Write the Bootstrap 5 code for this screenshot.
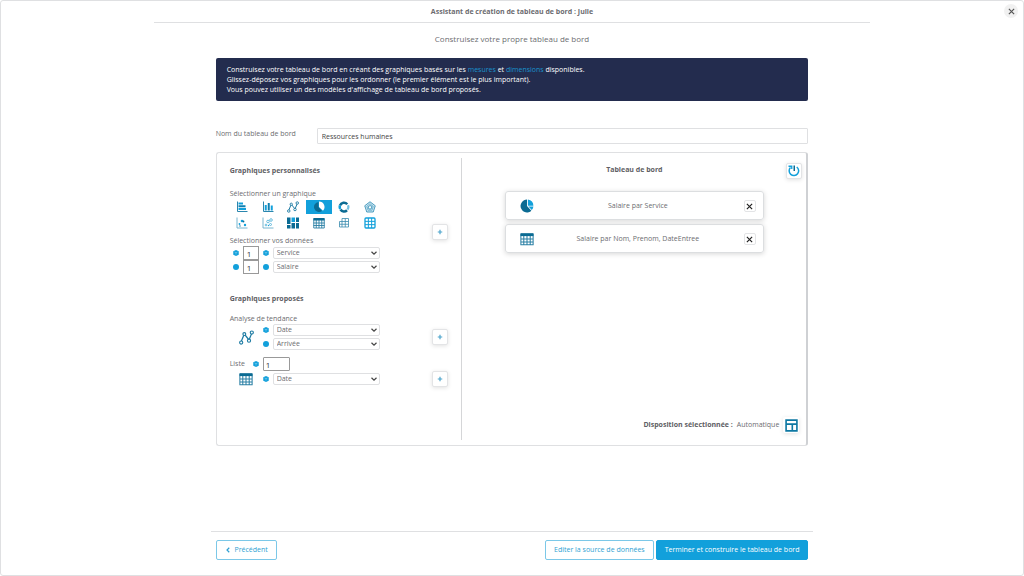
<!DOCTYPE html>
<html lang="fr">
<head>
<meta charset="utf-8">
<meta name="viewport" content="width=device-width, initial-scale=1">
<title>Assistant de création de tableau de bord</title>
<link href="https://cdn.jsdelivr.net/npm/bootstrap@5.3.0/dist/css/bootstrap.min.css" rel="stylesheet">
<style>
:root { --blue: #12a0db; --deep: #0b6b93; --ink: #6c6c70; --line: #dfe0e2; }
body { font-family: "Open Sans", sans-serif; font-size: 7px; line-height: 10px; color: var(--ink); background: #fff; }
svg { display: block; fill: none; }
.wizard { border: 1px solid var(--line); border-radius: 3px; }
.wizard-head { width: 70%; height: 22px; border-bottom: 1px solid var(--line); padding-top: 5px; }
.wizard-title { font-size: 7px; font-weight: 700; line-height: 12px; }
.wizard-close { top: 3px; right: 5px; width: 14px; height: 14px; background: #f1f1f1; color: #555; }
.wizard-sub { font-size: 8px; line-height: 12px; margin: 10px 0 13px; }
.wizard-body { width: 58%; }
.notice { background: #232c4e; color: #fff; border: 0; border-radius: 2px; padding: 7px 11px 6px; margin-bottom: 27px; }
.notice a { color: #1a92cc; text-decoration: none; }
.name-row { margin-bottom: 8px; }
.name-row label { width: 101px; padding-top: 1px; }
.form-control, .form-select { font-size: 7px; line-height: 10px; color: var(--ink); border-color: var(--line); border-radius: 1px; min-height: 0; }
.name-row .form-control { padding: 2px 4px; height: 16px; color: #444; }
.panel { border: 1px solid var(--line); border-right: 2px solid #cfd1d4; border-radius: 3px; padding: 5px 0; min-height: 294px; }
.builder { border-right: 1px solid #d5d6d8; padding: 8px 13px 0; }
.preview { padding: 5px 4px 7px; }
.section-title { font-size: 7px; font-weight: 700; line-height: 10px; margin: 0; color: #606064; }
.builder .section-title { margin-bottom: 13px; }
.builder .proposed { margin: 20px 0 10px; }
.preview-head .section-title { padding-top: 2px; grid-column: 2; }
.types { display: grid; width: 153px; grid-template-columns: repeat(6, 1fr); grid-auto-rows: 16px; margin-bottom: 5px; }
.types label { display: flex; align-items: center; justify-content: center; cursor: pointer; }
.types svg { width: 12px; height: 12px; }
.types .btn-check:checked + label { background: var(--blue); height: 14px; margin-top: 1px; }
.dot { width: 6px; height: 6px; flex: none; }
.field { padding: 1px 10px 1px 3px; height: 12px; width: 107px; line-height: 8px; border-radius: 2px;
  background-position: right 2px center; background-size: 6px 6px;
  background-image: url("data:image/svg+xml,%3csvg xmlns='http://www.w3.org/2000/svg' viewBox='0 0 12 12'%3e%3cpath fill='none' stroke='%23444' stroke-width='2.4' d='M1 3.5l5 5 5-5'/%3e%3c/svg%3e"); }
.count { width: 16px; height: 14px; padding: 0 3px; font-size: 8px; color: #333; border-color: #999; border-radius: 0; }
.count-wide { width: 27px; padding: 0 2px; border-radius: 1px; }
.pair { padding-left: 3px; gap: 4px; }
.field-stack { display: grid; gap: 2px; }
.trend { margin-bottom: 7px; }
.chart-glyph { width: 33px; }
.tile-btn { width: 16px; height: 16px; flex: none; padding: 0; display: flex; align-items: center; justify-content: center; background: #fff; border: 1px solid #e3e4e6; border-radius: 2px; box-shadow: 0 1px 4px rgba(0,0,0,.12); color: #4ba3cb; }
.preview-head { display: grid; grid-template-columns: 1fr auto 1fr; }
.items { width: 77%; gap: 4px; margin: 12px auto 0; }
.item { display: grid; grid-template-columns: 1fr auto 1fr; align-items: center; border: 1px solid #dcdee0; border-radius: 3px; box-shadow: 0 1px 5px rgba(0,0,0,.16); height: 29px; padding: 1px 7px 0 14px; }
.item-x { width: 12px; height: 12px; padding: 0; background: #fff; border: 1px solid #e3e4e6; border-radius: 2px; color: #222; display: flex; align-items: center; justify-content: center; margin-left: auto; }
.disposition { padding-right: 3px; gap: 4px; }
.wizard-foot { width: 59%; border-top: 1px solid var(--line); padding: 8px 5px 15px; gap: 2px; }
.wizard-foot .btn { font-size: 7px; line-height: 10px; height: 20px; padding: 4px 8px; border-radius: 2px; --bs-btn-color: #2f9fd2; --bs-btn-border-color: #7cc8e8; --bs-btn-hover-color: var(--deep); --bs-btn-hover-border-color: var(--blue); }
.wizard-foot .btn-go { --bs-btn-color: #fff; --bs-btn-bg: var(--blue); --bs-btn-border-color: var(--blue); --bs-btn-hover-bg: var(--deep); --bs-btn-hover-color: #fff; }
</style>
</head>
<body>
<svg width="0" height="0" class="position-absolute" aria-hidden="true">
  <symbol id="i-hbar" viewBox="0 0 24 24"><path d="M3 1v20h20" stroke="#2a86ae" stroke-width="2"/><path d="M5 5h9" stroke="#12a0db" stroke-width="4"/><path d="M5 16h15" stroke="#12a0db" stroke-width="4"/><path d="M5 10.500h14" stroke="#0e7fb0" stroke-width="4"/></symbol>
  <symbol id="i-vbar" viewBox="0 0 24 24"><path d="M3 1v20h20" stroke="#2a86ae" stroke-width="2"/><path d="M7.500 19V8M19.500 19V9" stroke="#12a0db" stroke-width="4"/><path d="M13.500 19V4" stroke="#0e7fb0" stroke-width="4"/></symbol>
  <symbol id="i-line" viewBox="0 0 24 24"><path d="M3.500 18.500L8.500 6.500L16 16L20.500 5" stroke="#1d7ba3" stroke-width="2"/><g fill="#fff" stroke="#1d7ba3" stroke-width="1.800"><circle cx="3.500" cy="20" r="2.500"/><circle cx="8.500" cy="6.500" r="2.300"/><circle cx="16" cy="17" r="2.500"/><circle cx="20.500" cy="4" r="2.500"/></g></symbol>
  <symbol id="i-piew" viewBox="0 0 24 24"><path d="M11 2a10 10 0 1 0 7 18L11 12z" fill="#0b6b93"/><path d="M12 1a11 11 0 0 1 8 18.500L12 12z" fill="#fff"/></symbol>
  <symbol id="i-pie" viewBox="0 0 24 24"><path d="M12 1a11 11 0 1 0 7.500 19L12 12z" fill="#0b6b93"/><path d="M13.500 1a11 11 0 0 1 9.500 10.500H13.500z" fill="#12a0db"/><path d="M14.500 13H23a11 11 0 0 1-2.800 6z" fill="#12a0db"/></symbol>
  <symbol id="i-donut" viewBox="0 0 24 24"><path d="M4 9A8.500 8.500 0 0 1 18.500 6.500" stroke="#0b6b93" stroke-width="5"/><path d="M20 8.500A8.500 8.500 0 0 1 19 17" stroke="#6fbfe0" stroke-width="4.500"/><path d="M18 18.500A8.500 8.500 0 0 1 5 17" stroke="#0b6b93" stroke-width="5"/><path d="M4.500 16A8.500 8.500 0 0 1 4 9" stroke="#12a0db" stroke-width="5"/></symbol>
  <symbol id="i-radar" viewBox="0 0 24 24"><path d="M12 1.500L22.500 9.500L18.500 22H5.500L1.500 9.500z" fill="#cfe6f1" stroke="#3a93b9" stroke-width="1.800"/><path d="M12 5.500L18.500 10.500L16 18.500H8L5.500 10.500z" stroke="#5aa9cb" stroke-width="1.500"/><path d="M12 9l4 2-2 5h-4l-2-4z" fill="#fff" stroke="#2b88b0" stroke-width="1.600"/></symbol>
  <symbol id="i-scat" viewBox="0 0 24 24"><path d="M2 1v21h21" stroke="#6aaecb" stroke-width="1.800"/><g fill="#12a0db"><circle cx="12" cy="8" r="2.600"/><circle cx="7" cy="14" r="1.800"/><circle cx="18" cy="16" r="2.400"/></g><circle cx="15" cy="9" r="1.800" fill="#0b6b93"/><circle cx="8" cy="18" r="1.300" fill="#0b6b93"/></symbol>
  <symbol id="i-bub" viewBox="0 0 24 24"><path d="M2 1v21h21" stroke="#6aaecb" stroke-width="1.800"/><g stroke="#3fa9d4" stroke-width="1.500"><circle cx="12" cy="9" r="2.600"/><circle cx="18" cy="6" r="2.600"/><circle cx="17" cy="15" r="2"/><circle cx="8" cy="16" r="1.800"/></g><circle cx="13" cy="17" r="1.300" fill="#12a0db"/></symbol>
  <symbol id="i-tree" viewBox="0 0 24 24"><path d="M0 1h7v13H0zM9 12h7v11H9zM18 1h6v9h-6z" fill="#0b6b93"/><path d="M0 16h7v7H0zM18 12h6v11h-6z" fill="#0b6b93"/><path d="M9 1h7v9H9z" fill="#12a0db"/></symbol>
  <symbol id="i-table" viewBox="0 0 24 24"><path d="M1.500 3v19h21V3M6.500 6v16M12 6v16M17.500 6v16M1 12h22M1 17h22" stroke="#2b80a5" stroke-width="1.800"/><path d="M1 2h22v5H1z" fill="#0b6b93"/></symbol>
  <symbol id="i-pivot" viewBox="0 0 24 24"><path d="M8 3h13v17H3V9h18M8 3v17M14.500 3v17M3 14.500h18" stroke="#3a8cae" stroke-width="1.600"/></symbol>
  <symbol id="i-grid" viewBox="0 0 24 24"><rect x="2" y="2" width="20" height="20" rx="2" stroke="#12a0db" stroke-width="2.600"/><path d="M8.700 2v20M15.300 2v20M2 8.700h20M2 15.300h20" stroke="#12a0db" stroke-width="2"/></symbol>
  <symbol id="i-cube" viewBox="0 0 12 12"><path d="M6 0l5.500 2.700v6.600L6 12L.500 9.300V2.700z" fill="#12a0db"/><path d="M3 4l3 1.500L9 4M6 5.500V9" stroke="#9fd8f0" stroke-width="1"/></symbol>
  <symbol id="i-disc" viewBox="0 0 12 12"><circle cx="6" cy="6" r="6" fill="#12a0db"/></symbol>
  <symbol id="i-plus" viewBox="0 0 12 12"><path d="M6 1.500v9M1.500 6h9" stroke="currentColor" stroke-width="2.400"/></symbol>
  <symbol id="i-x" viewBox="0 0 12 12"><path d="M1.500 1.500l9 9M10.500 1.500l-9 9" stroke="currentColor" stroke-width="2"/></symbol>
  <symbol id="i-power" viewBox="0 0 24 24"><path d="M5 5A9.500 9.500 0 1 0 17.500 4" stroke="#12a0db" stroke-width="3"/><path d="M12.500 1v11" stroke="#0b6b93" stroke-width="3"/><path d="M1 2.500H7.500V8" stroke="#12a0db" stroke-width="2.600"/></symbol>
  <symbol id="i-layout" viewBox="0 0 24 24"><path d="M2 2h20v20H2zM2 9.500h20M13.500 10v12" stroke="#0e78a3" stroke-width="3"/></symbol>
</svg>

<main class="wizard position-relative min-vh-100 d-flex flex-column align-items-center">
  <header class="wizard-head text-center"><h1 class="wizard-title m-0">Assistant de création de tableau de bord : Julie</h1></header>
  <button type="button" class="wizard-close btn p-0 border-0 rounded-circle position-absolute d-flex align-items-center justify-content-center" aria-label="Fermer"><svg width="7" height="7"><use href="#i-x"/></svg></button>
  <p class="wizard-sub text-center">Construisez votre propre tableau de bord</p>

  <div class="wizard-body">
    <div class="notice alert">
      Construisez votre tableau de bord en créant des graphiques basés sur les <a href="#">mesures</a> et <a href="#">dimensions</a> disponibles.<br>
      Glissez-déposez vos graphiques pour les ordonner (le premier élément est le plus important).<br>
      Vous pouvez utiliser un des modèles d'affichage de tableau de bord proposés.
    </div>
    <div class="name-row d-flex">
      <label for="nom" class="flex-shrink-0">Nom du tableau de bord</label>
      <input id="nom" class="form-control" type="text" value="Ressources humaines">
    </div>

    <div class="panel row g-0">
      <section class="builder col-5">
        <h2 class="section-title">Graphiques personnalisés</h2>
        <div class="d-flex align-items-center justify-content-between">
          <div>
            <div>Sélectionner un graphique</div>
            <div class="types" role="radiogroup" aria-label="Sélectionner un graphique">
              <input class="btn-check" type="radio" name="t" id="t1"><label for="t1" title="Barres"><svg><use href="#i-hbar"/></svg></label>
              <input class="btn-check" type="radio" name="t" id="t2"><label for="t2" title="Histogramme"><svg><use href="#i-vbar"/></svg></label>
              <input class="btn-check" type="radio" name="t" id="t3"><label for="t3" title="Courbe"><svg><use href="#i-line"/></svg></label>
              <input class="btn-check" type="radio" name="t" id="t4" checked><label for="t4" title="Secteurs"><svg><use href="#i-piew"/></svg></label>
              <input class="btn-check" type="radio" name="t" id="t5"><label for="t5" title="Anneau"><svg><use href="#i-donut"/></svg></label>
              <input class="btn-check" type="radio" name="t" id="t6"><label for="t6" title="Radar"><svg><use href="#i-radar"/></svg></label>
              <input class="btn-check" type="radio" name="t" id="t7"><label for="t7" title="Nuage de points"><svg><use href="#i-scat"/></svg></label>
              <input class="btn-check" type="radio" name="t" id="t8"><label for="t8" title="Bulles"><svg><use href="#i-bub"/></svg></label>
              <input class="btn-check" type="radio" name="t" id="t9"><label for="t9" title="Treemap"><svg><use href="#i-tree"/></svg></label>
              <input class="btn-check" type="radio" name="t" id="t10"><label for="t10" title="Liste"><svg><use href="#i-table"/></svg></label>
              <input class="btn-check" type="radio" name="t" id="t11"><label for="t11" title="Tableau croisé"><svg><use href="#i-pivot"/></svg></label>
              <input class="btn-check" type="radio" name="t" id="t12"><label for="t12" title="Grille"><svg><use href="#i-grid"/></svg></label>
            </div>
            <div>Sélectionner vos données</div>
            <div class="pair d-flex align-items-center">
              <svg class="dot"><use href="#i-cube"/></svg>
              <input class="form-control count" type="text" value="1" aria-label="Nombre de dimensions">
              <svg class="dot"><use href="#i-cube"/></svg>
              <select class="form-select field" aria-label="Dimension"><option>Service</option></select>
            </div>
            <div class="pair d-flex align-items-center">
              <svg class="dot"><use href="#i-disc"/></svg>
              <input class="form-control count" type="text" value="1" aria-label="Nombre de mesures">
              <svg class="dot"><use href="#i-disc"/></svg>
              <select class="form-select field" aria-label="Mesure"><option>Salaire</option></select>
            </div>
          </div>
          <button type="button" class="tile-btn" aria-label="Ajouter le graphique"><svg width="6" height="6"><use href="#i-plus"/></svg></button>
        </div>

        <h2 class="section-title proposed">Graphiques proposés</h2>
        <div>Analyse de tendance</div>
        <div class="trend d-flex align-items-center">
          <div class="chart-glyph d-flex justify-content-center"><svg width="15" height="15"><use href="#i-line"/></svg></div>
          <div class="field-stack">
            <div class="d-flex align-items-center gap-1"><svg class="dot"><use href="#i-cube"/></svg><select class="form-select field" aria-label="Dimension de tendance"><option>Date</option></select></div>
            <div class="d-flex align-items-center gap-1"><svg class="dot"><use href="#i-disc"/></svg><select class="form-select field" aria-label="Mesure de tendance"><option>Arrivée</option></select></div>
          </div>
          <button type="button" class="tile-btn ms-auto" aria-label="Ajouter la tendance"><svg width="6" height="6"><use href="#i-plus"/></svg></button>
        </div>
        <div class="d-flex align-items-center">
          <label for="nliste" class="pe-2">Liste</label>
          <svg class="dot me-1"><use href="#i-cube"/></svg>
          <input id="nliste" class="form-control count count-wide" type="text" value="1">
        </div>
        <div class="d-flex align-items-center">
          <div class="chart-glyph d-flex justify-content-center"><svg width="14" height="14"><use href="#i-table"/></svg></div>
          <div class="d-flex align-items-center gap-1"><svg class="dot"><use href="#i-cube"/></svg><select class="form-select field" aria-label="Dimension de la liste"><option>Date</option></select></div>
          <button type="button" class="tile-btn ms-auto" aria-label="Ajouter la liste"><svg width="6" height="6"><use href="#i-plus"/></svg></button>
        </div>
      </section>

      <section class="preview col-7 d-flex flex-column">
        <div class="preview-head">
          <h2 class="section-title">Tableau de bord</h2>
          <button type="button" class="tile-btn ms-auto" aria-label="Réinitialiser"><svg width="12" height="12"><use href="#i-power"/></svg></button>
        </div>
        <div class="items d-flex flex-column">
          <div class="item">
            <svg width="14" height="14"><use href="#i-pie"/></svg>
            <span>Salaire par Service</span>
            <button type="button" class="item-x" aria-label="Supprimer"><svg width="7" height="7"><use href="#i-x"/></svg></button>
          </div>
          <div class="item">
            <svg width="14" height="14"><use href="#i-table"/></svg>
            <span>Salaire par Nom, Prenom, DateEntree</span>
            <button type="button" class="item-x" aria-label="Supprimer"><svg width="7" height="7"><use href="#i-x"/></svg></button>
          </div>
        </div>
        <div class="disposition mt-auto d-flex align-items-center justify-content-end">
          <strong class="section-title">Disposition sélectionnée :</strong>
          <span>Automatique</span>
          <button type="button" class="tile-btn border-0" aria-label="Choisir la disposition"><svg width="13" height="13"><use href="#i-layout"/></svg></button>
        </div>
      </section>
    </div>
  </div>

  <footer class="wizard-foot d-flex mt-auto">
    <button type="button" class="btn me-auto d-flex align-items-center gap-1"><svg width="6" height="6" viewBox="0 0 12 12"><path d="M8.500 1.500L4 6l4.500 4.500" stroke="currentColor" stroke-width="2.400"/></svg>Précédent</button>
    <button type="button" class="btn">Editer la source de données</button>
    <button type="button" class="btn btn-go">Terminer et construire le tableau de bord</button>
  </footer>
</main>
<script src="https://cdn.jsdelivr.net/npm/bootstrap@5.3.0/dist/js/bootstrap.bundle.min.js"></script>
</body>
</html>
